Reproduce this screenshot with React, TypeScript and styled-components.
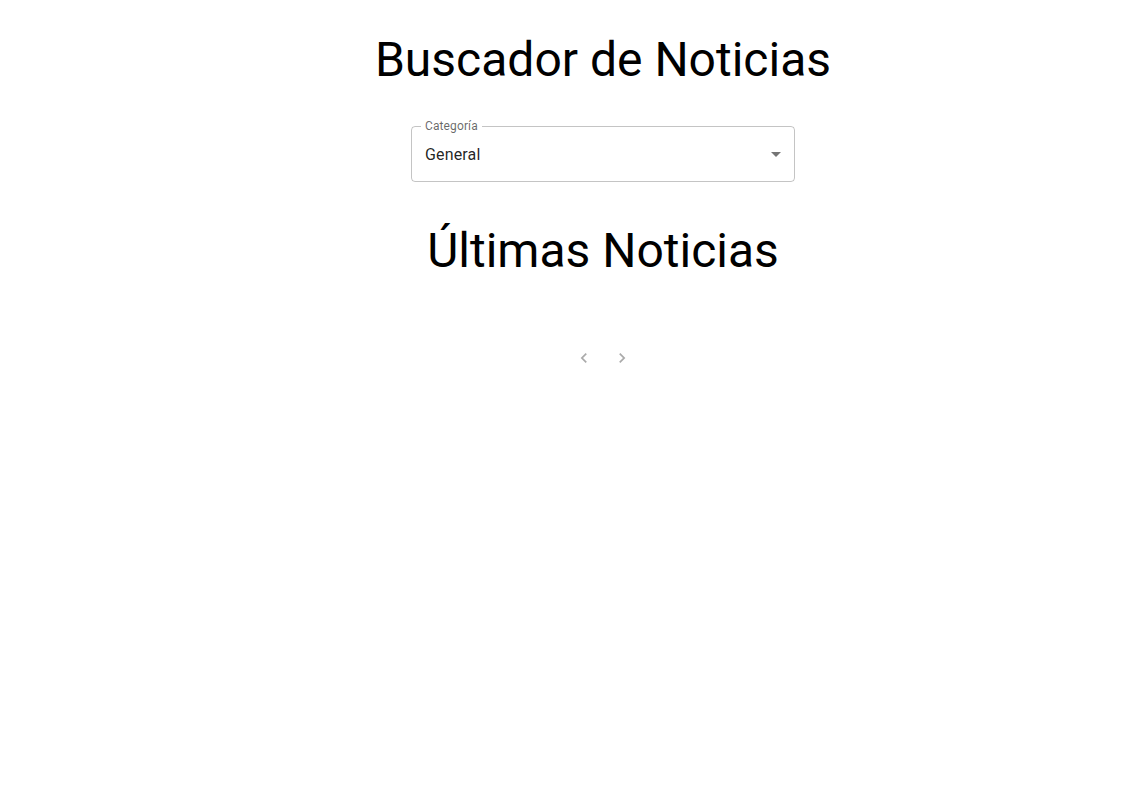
import styled, { createGlobalStyle } from "styled-components";

const GlobalStyle = createGlobalStyle`
  body {
    margin: 0;
    background: #fff;
    font-family: Roboto, "Liberation Sans", sans-serif;
    color: rgba(0, 0, 0, 0.87);
  }
`;

const Page = styled.main`
  display: flex;
  flex-direction: column;
  align-items: center;
  padding: 32px 0 0 67px;
`;

const Title = styled.h1`
  margin: 0;
  font-size: 48px;
  font-weight: 400;
  line-height: 56px;
  color: #000;
`;

const Field = styled.div`
  position: relative;
  width: 384px;
  height: 56px;
  margin-top: 38px;
  box-sizing: border-box;
  border: 1px solid rgba(0, 0, 0, 0.23);
  border-radius: 4px;
  display: flex;
  align-items: center;
  padding: 0 6px 0 13px;
`;

const FieldLabel = styled.span`
  position: absolute;
  top: -9px;
  left: 9px;
  padding: 0 4px 0 4px;
  background: #fff;
  font-size: 12px;
  line-height: 17px;
  letter-spacing: 0.01em;
  color: rgba(0, 0, 0, 0.6);
`;

const Value = styled.span`
  flex: 1;
  font-size: 16px;
  line-height: 23px;
  letter-spacing: 0.00938em;
`;

const DropIcon = styled.svg`
  width: 24px;
  height: 24px;
  fill: rgba(0, 0, 0, 0.54);
`;

const Subtitle = styled(Title)`
  margin-top: 41px;
`;

const Pager = styled.nav`
  display: flex;
  gap: 6px;
  margin-top: 63px;
`;

const PageButton = styled.button`
  width: 32px;
  height: 32px;
  border: 0;
  padding: 0;
  background: transparent;
  display: flex;
  align-items: center;
  justify-content: center;
  opacity: 0.38;

  svg {
    width: 20px;
    height: 20px;
    fill: rgba(0, 0, 0, 0.87);
  }
`;

export default function App() {
  return (
    <>
      <GlobalStyle />
      <Page>
        <Title>Buscador de Noticias</Title>
        <Field>
          <FieldLabel>Categoría</FieldLabel>
          <Value>General</Value>
          <DropIcon viewBox="0 0 24 24">
            <path d="M7 10l5 5 5-5z" />
          </DropIcon>
        </Field>
        <Subtitle>Últimas Noticias</Subtitle>
        <Pager>
          <PageButton disabled aria-label="anterior">
            <svg viewBox="0 0 24 24">
              <path d="M15.41 7.41 14 6l-6 6 6 6 1.41-1.41L10.83 12z" />
            </svg>
          </PageButton>
          <PageButton disabled aria-label="siguiente">
            <svg viewBox="0 0 24 24">
              <path d="M10 6 8.59 7.41 13.17 12l-4.58 4.59L10 18l6-6z" />
            </svg>
          </PageButton>
        </Pager>
      </Page>
    </>
  );
}
